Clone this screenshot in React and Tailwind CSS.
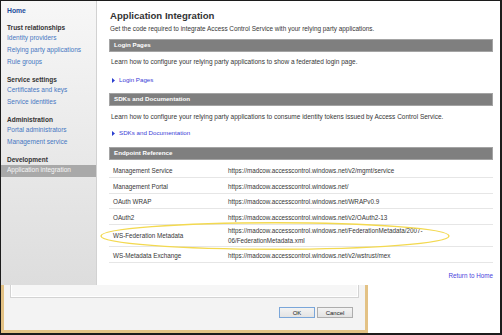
import React from 'react';

const navGroups = [
  { title: 'Trust relationships', links: ['Identity providers', 'Relying party applications', 'Rule groups'] },
  { title: 'Service settings', links: ['Certificates and keys', 'Service identities'] },
  { title: 'Administration', links: ['Portal administrators', 'Management service'] },
  { title: 'Development', links: ['Application integration'] },
];

const endpoints = [
  ['Management Service', ['https://madcow.accesscontrol.windows.net/v2/mgmt/service']],
  ['Management Portal', ['https://madcow.accesscontrol.windows.net/']],
  ['OAuth WRAP', ['https://madcow.accesscontrol.windows.net/WRAPv0.9']],
  ['OAuth2', ['https://madcow.accesscontrol.windows.net/v2/OAuth2-13']],
  ['WS-Federation Metadata', ['https://madcow.accesscontrol.windows.net/FederationMetadata/2007-', '06/FederationMetadata.xml']],
  ['WS-Metadata Exchange', ['https://madcow.accesscontrol.windows.net/v2/wstrust/mex']],
];

const Bar = ({ title, className = '' }) => (
  <div className={`h-[13px] flex items-center pl-[4px] bg-[#7f7f7f] border border-[#a4a4a4] text-white font-bold text-[6.2px] leading-none ${className}`}>
    {title}
  </div>
);

const Arrow = ({ label, className = '' }) => (
  <div className={`h-[8px] flex items-center pl-[3px] gap-[4px] text-[6.2px] leading-none text-[#3c3cd6] ${className}`}>
    <svg width="3" height="5" viewBox="0 0 3 5">
      <path d="M0 0 L3 2.5 L0 5 Z" fill="#2b3fd0" />
    </svg>
    <span>{label}</span>
  </div>
);

const Nav = () => (
  <div className="w-[96px] shrink-0 border-r border-[#d2d2d2] bg-gradient-to-b from-[#f7f7f7] to-[#dddddd] pt-[5px]">
    <div className="h-[10px] flex items-center pl-[6px] text-[6.8px] leading-none font-bold text-[#1f4c9c]">Home</div>
    {navGroups.map((g, gi) => (
      <div key={g.title} className={gi === 0 ? 'mt-[7.5px]' : 'mt-[7px]'}>
        <div className="h-[9px] flex items-center pl-[6px] text-[6.5px] leading-none font-bold text-[#333]">{g.title}</div>
        {g.links.map((l) =>
          l === 'Application integration' ? (
            <div key={l} className="h-[12px] flex items-center pl-[6px] bg-[#a9a9a9] text-[6.5px] leading-none text-[#f6f6f6]">{l}</div>
          ) : (
            <div key={l} className="h-[12px] flex items-center pl-[6px] text-[6.5px] leading-none text-[#4677c2]">{l}</div>
          )
        )}
      </div>
    ))}
  </div>
);

const Main = () => (
  <div className="flex-1 bg-white pl-[12px] pr-[7px] pt-[8.5px] text-[#363636]">
    <div className="h-[12px] flex items-center pl-[1px] text-[9.6px] leading-none font-bold text-[#333]">Application Integration</div>
    <div className="mt-[4px] h-[8px] flex items-center pl-[1px] text-[6.4px] leading-none">
      Get the code required to integrate Access Control Service with your relying party applications.
    </div>
    <Bar title="Login Pages" className="mt-[5.5px]" />
    <div className="mt-[6px] h-[8px] flex items-center pl-[2px] text-[6.5px] leading-none">
      Learn how to configure your relying party applications to show a federated login page.
    </div>
    <Arrow label="Login Pages" className="mt-[10px]" />
    <Bar title="SDKs and Documentation" className="mt-[9px]" />
    <div className="mt-[7px] h-[8px] flex items-center pl-[2px] text-[6.5px] leading-none">
      Learn how to configure your relying party applications to consume identity tokens issued by Access Control Service.
    </div>
    <Arrow label="SDKs and Documentation" className="mt-[8.5px]" />
    <Bar title="Endpoint Reference" className="mt-[9.5px]" />
    <div className="mt-[2.5px]">
      {endpoints.map(([name, url]) => (
        <div
          key={name}
          className={`flex items-center border-b border-[#e6e6e6] text-[6.3px] ${url.length > 1 ? 'pt-[1.7px]' : 'pt-[4.5px] pb-[2px]'}`}
        >
          <div className="w-[119px] shrink-0 pl-[4px] leading-[8px]">{name}</div>
          <div className={url.length > 1 ? 'leading-[10px]' : 'leading-[8px]'}>
            {url.map((u) => (
              <div key={u}>{u}</div>
            ))}
          </div>
        </div>
      ))}
    </div>
    <div className="mt-[9.5px] h-[8px] flex items-center justify-end text-[6.3px] leading-none text-[#4a42dc]">Return to Home</div>
  </div>
);

const Dialog = () => (
  <div className="w-[367px] shrink-0 bg-[#f3f3f3] border-l-[3px] border-r-[3px] border-b-[3px] border-[#e3c285] flex flex-col">
    <div className="mx-[6px] h-[13px] border border-t-0 border-[#d3d3d3] bg-[#f6f6f6] shadow-[inset_1px_0_0_#ffffff,inset_-1px_-1px_0_#ffffff]" />
    <div className="mt-[9px] mr-[12px] flex justify-end gap-[2px]">
      <div className="w-[36px] h-[11px] flex items-center justify-center border border-[#7aa6d9] bg-gradient-to-b from-[#f3f3f3] to-[#e3e3e3] text-[6px] leading-none text-[#222]">OK</div>
      <div className="w-[36px] h-[11px] flex items-center justify-center border border-[#adadad] bg-gradient-to-b from-[#f3f3f3] to-[#e3e3e3] text-[6px] leading-none text-[#222]">Cancel</div>
    </div>
  </div>
);

export default function App() {
  return (
    <div
      className="relative w-[502px] h-[335px] overflow-hidden border-t border-l border-r-2 border-b-2 border-[#1c1c1c] bg-white flex flex-col"
      style={{ fontFamily: '"Liberation Sans", Arial, sans-serif' }}
    >
      <div className="h-[284px] flex shrink-0">
        <Nav />
        <Main />
      </div>
      <div className="flex-1 flex">
        <Dialog />
        <div className="flex-1 bg-white" />
      </div>
      <svg className="absolute left-0 top-0 pointer-events-none" width="500" height="333" viewBox="0 0 500 333">
        <ellipse cx="274" cy="235" rx="174" ry="13.3" fill="none" stroke="#f3d950" strokeWidth="1.4" />
      </svg>
    </div>
  );
}
